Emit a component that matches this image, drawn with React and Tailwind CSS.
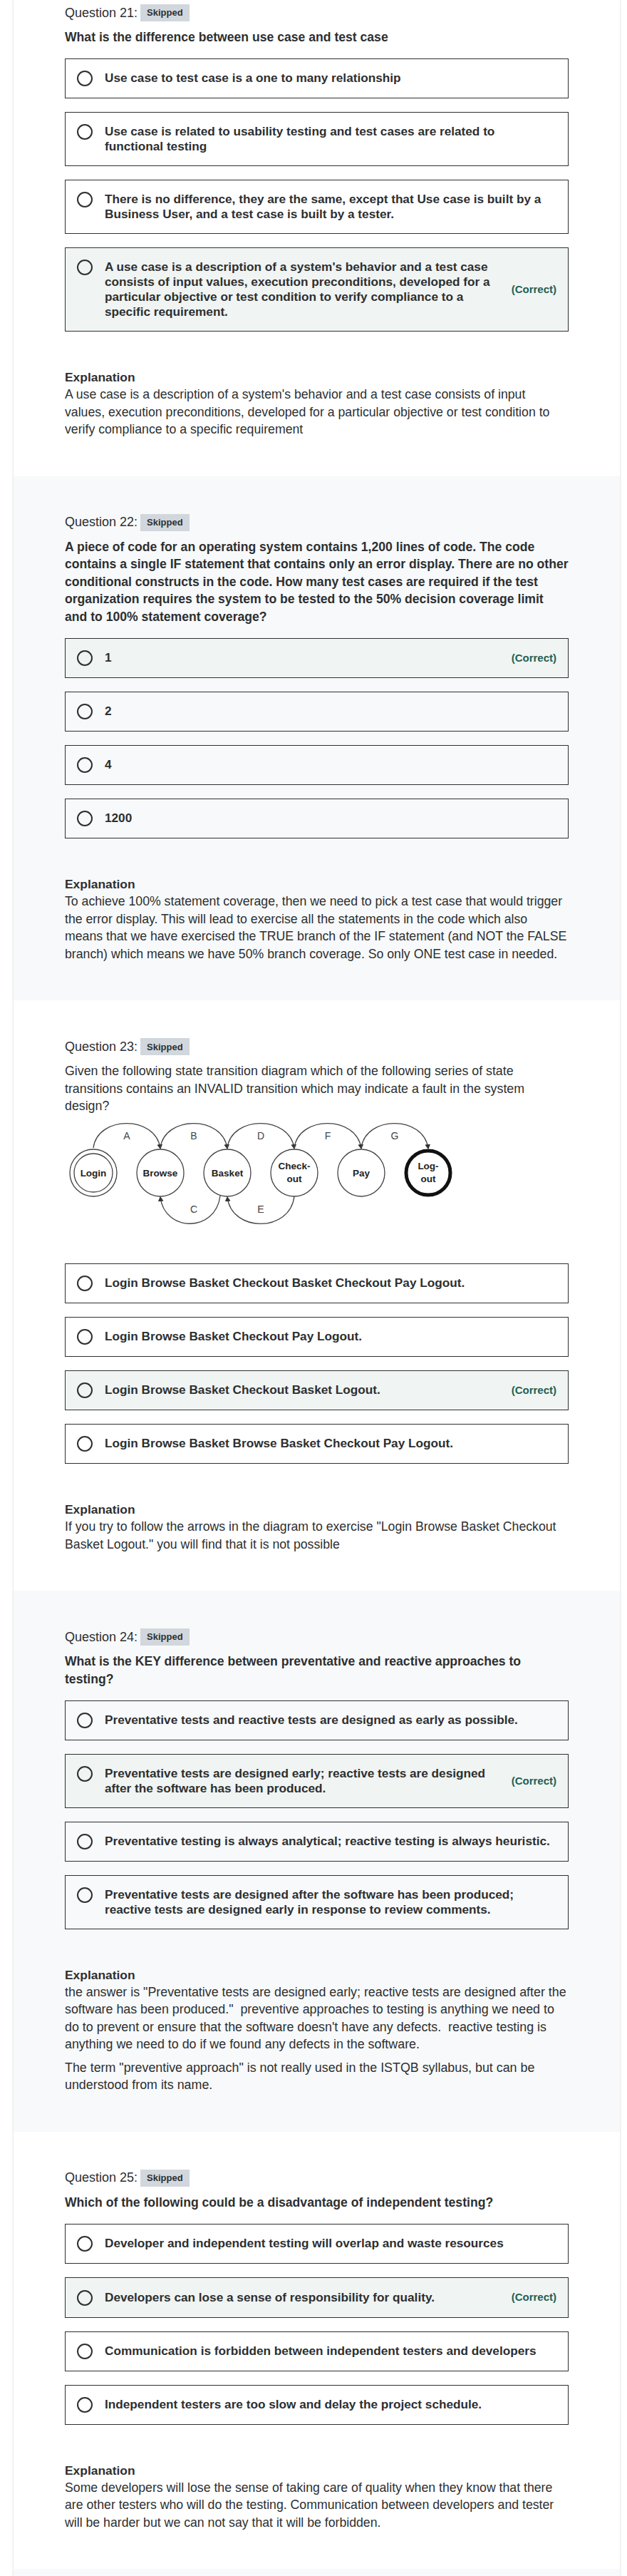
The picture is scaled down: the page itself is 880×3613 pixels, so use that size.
import React from 'react'

const questions = [
  {
    num: 21,
    bg: 'bg-white',
    first: true,
    bold: true,
    text: 'What is the difference between use case and test case',
    options: [
      { text: 'Use case to test case is a one to many relationship' },
      { text: 'Use case is related to usability testing and test cases are related to functional testing' },
      { text: 'There is no difference, they are the same, except that Use case is built by a Business User, and a test case is built by a tester.' },
      {
        text: "A use case is a description of a system's behavior and a test case consists of input values, execution preconditions, developed for a particular objective or test condition to verify compliance to a specific requirement.",
        correct: true
      }
    ],
    explanation: [
      "A use case is a description of a system's behavior and a test case consists of input values, execution preconditions, developed for a particular objective or test condition to verify compliance to a specific requirement"
    ]
  },
  {
    num: 22,
    bg: 'bg-[#f7f9fa]',
    bold: true,
    text: 'A piece of code for an operating system contains 1,200 lines of code. The code contains a single IF statement that contains only an error display. There are no other conditional constructs in the code. How many test cases are required if the test organization requires the system to be tested to the 50% decision coverage limit and to 100% statement coverage?',
    options: [
      { text: '1', correct: true },
      { text: '2' },
      { text: '4' },
      { text: '1200' }
    ],
    explanation: [
      'To achieve 100% statement coverage, then we need to pick a test case that would trigger the error display. This will lead to exercise all the statements in the code which also means that we have exercised the TRUE branch of the IF statement (and NOT the FALSE branch) which means we have 50% branch coverage. So only ONE test case in needed.'
    ]
  },
  {
    num: 23,
    bg: 'bg-white',
    bold: false,
    diagram: true,
    text: 'Given the following state transition diagram which of the following series of state transitions contains an INVALID transition which may indicate a fault in the system design?',
    options: [
      { text: 'Login Browse Basket Checkout Basket Checkout Pay Logout.' },
      { text: 'Login Browse Basket Checkout Pay Logout.' },
      { text: 'Login Browse Basket Checkout Basket Logout.', correct: true },
      { text: 'Login Browse Basket Browse Basket Checkout Pay Logout.' }
    ],
    explanation: [
      'If you try to follow the arrows in the diagram to exercise "Login Browse Basket Checkout Basket Logout." you will find that it is not possible'
    ]
  },
  {
    num: 24,
    bg: 'bg-[#f7f9fa]',
    bold: true,
    wideExp: true,
    text: 'What is the KEY difference between preventative and reactive approaches to testing?',
    options: [
      { text: 'Preventative tests and reactive tests are designed as early as possible.' },
      { text: 'Preventative tests are designed early; reactive tests are designed after the software has been produced.', correct: true },
      { text: 'Preventative testing is always analytical; reactive testing is always heuristic.' },
      { text: 'Preventative tests are designed after the software has been produced; reactive tests are designed early in response to review comments.' }
    ],
    explanation: [
      'the answer is "Preventative tests are designed early; reactive tests are designed after the software has been produced." \u00a0preventive approaches to testing is anything we need to do to prevent or ensure that the software doesn\'t have any defects. \u00a0reactive testing is anything we need to do if we found any defects in the software.',
      'The term "preventive approach" is not really used in the ISTQB syllabus, but can be understood from its name.'
    ]
  },
  {
    num: 25,
    bg: 'bg-white',
    bold: true,
    text: 'Which of the following could be a disadvantage of independent testing?',
    options: [
      { text: 'Developer and independent testing will overlap and waste resources' },
      { text: 'Developers can lose a sense of responsibility for quality.', correct: true },
      { text: 'Communication is forbidden between independent testers and developers' },
      { text: 'Independent testers are too slow and delay the project schedule.' }
    ],
    explanation: [
      'Some developers will lose the sense of taking care of quality when they know that there are other testers who will do the testing. Communication between developers and tester will be harder but we can not say that it will be forbidden.'
    ]
  }
]

function StateDiagram() {
  const cx = [40, 134, 228, 322, 416, 510]
  const cy = 81
  const r = 33
  const top = ['A', 'B', 'D', 'F', 'G']

  return (
    <svg width="560" height="190" viewBox="0 0 560 190" className="block">
      <defs>
        <marker id="arr" markerWidth="8" markerHeight="8" refX="6" refY="4" orient="auto" markerUnits="userSpaceOnUse">
          <path d="M0,0 L7,4 L0,8 z" fill="#333" />
        </marker>
      </defs>
      <g fill="none" stroke="#444" strokeWidth="1.3">
        {top.map((l, i) => (
          <path
            key={l}
            d={`M${cx[i]},${cy - r - 2} C${cx[i] + 6},0 ${cx[i + 1] - 6},0 ${cx[i + 1]},${cy - r - 1}`}
            markerEnd="url(#arr)"
          />
        ))}
        {/* C: Basket -> Browse, E: Checkout -> Basket */}
        <path d={`M${cx[2] - 10},${cy + r - 1} C${cx[2] - 16},165 ${cx[1] + 6},165 ${cx[1]},${cy + r + 1}`} markerEnd="url(#arr)" />
        <path d={`M${cx[3]},${cy + r} C${cx[3] - 6},165 ${cx[2] + 6},165 ${cx[2]},${cy + r + 1}`} markerEnd="url(#arr)" />

        <circle cx={cx[0]} cy={cy} r={r} />
        <circle cx={cx[0]} cy={cy} r={r - 6} />
        <circle cx={cx[1]} cy={cy} r={r} />
        <circle cx={cx[2]} cy={cy} r={r} />
        <circle cx={cx[3]} cy={cy} r={r} />
        <circle cx={cx[4]} cy={cy} r={r} />
        <circle cx={cx[5]} cy={cy} r={r - 2} stroke="#111" strokeWidth="5" />
      </g>
      <g fill="#444" fontFamily="'Liberation Sans', Arial, sans-serif" fontSize="14" textAnchor="middle">
        {top.map((l, i) => (
          <text key={l} x={(cx[i] + cx[i + 1]) / 2} y="34">{l}</text>
        ))}
        <text x={(cx[1] + cx[2]) / 2} y="137">C</text>
        <text x={(cx[2] + cx[3]) / 2} y="137">E</text>
      </g>
      <g fill="#222" fontFamily="'Liberation Sans', Arial, sans-serif" fontSize="13.5" fontWeight="bold" textAnchor="middle">
        <text x={cx[0]} y={cy + 5}>Login</text>
        <text x={cx[1]} y={cy + 5}>Browse</text>
        <text x={cx[2]} y={cy + 5}>Basket</text>
        <text x={cx[3]} y={cy - 5}>Check-</text>
        <text x={cx[3]} y={cy + 13}>out</text>
        <text x={cx[4]} y={cy + 5}>Pay</text>
        <text x={cx[5]} y={cy - 5}>Log-</text>
        <text x={cx[5]} y={cy + 13}>out</text>
      </g>
    </svg>
  )
}

function Option({ text, correct }) {
  return (
    <div
      className={`flex items-center border border-[#2d2f31] px-4 py-4 ${correct ? 'bg-[#f0f4f2]' : ''}`}
    >
      <div className="flex flex-1 items-start gap-[17px]">
        <span className="h-[22px] w-[22px] shrink-0 rounded-full border-2 border-[#2d2f31]" />
        <span className={`flex-1 text-[17.2px] font-bold leading-[21px] text-[#2d2f31] ${correct ? 'pr-4' : ''}`}>
          {text}
        </span>
      </div>
      {correct && (
        <span className="shrink-0 text-[15px] font-bold text-[#1e6055]">(Correct)</span>
      )}
    </div>
  )
}

function Question({ q }) {
  return (
    <section className={`${q.bg} px-[72px] ${q.first ? 'pt-[6px]' : 'pt-[53px]'} pb-[53px]`}>
      <div className="flex h-6 items-center">
        <span className="text-[18px] font-light text-[#2d2f31]">Question {q.num}:</span>
        <span className="ml-1 flex h-6 items-center bg-[#d1d7dc] px-[9px] text-[13px] font-bold text-[#2d2f31]">
          Skipped
        </span>
      </div>

      <p className={`mt-[10px] leading-[24.4px] text-[#2d2f31] ${q.bold ? 'text-[17.6px] font-bold' : 'text-[17.8px]'}`}>
        {q.text}
      </p>

      {q.diagram && <StateDiagram />}

      <div className="mt-[18px] flex flex-col gap-[19px]">
        {q.options.map((o, i) => (
          <Option key={i} text={o.text} correct={o.correct} />
        ))}
      </div>

      <div className="mt-[52px] text-[#2d2f31]">
        <p className="text-[17.4px] font-bold leading-[24px]">Explanation</p>
        {q.explanation.map((p, i) => (
          <p
            key={i}
            className={`leading-[24.5px] ${q.wideExp ? 'text-[17.85px]' : 'text-[17.7px]'} ${i > 0 ? 'mt-2' : ''}`}
          >
            {p}
          </p>
        ))}
      </div>
    </section>
  )
}

export default function App() {
  return (
    <div className="min-h-screen bg-white font-['Liberation_Sans',Arial,sans-serif]">
      <div className="ml-[19px] w-[851px] shadow-[0_0_3px_rgba(0,0,0,0.18)]">
        {questions.map((q) => (
          <Question key={q.num} q={q} />
        ))}
        <div className="h-[40px] bg-[#f7f9fa]" />
      </div>
    </div>
  )
}
